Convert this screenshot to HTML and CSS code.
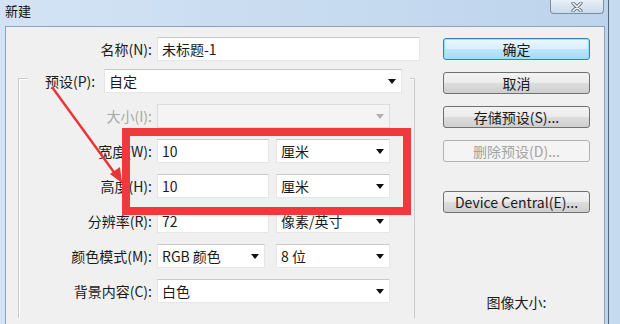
FILE: index.html
```html
<!DOCTYPE html>
<html lang="zh-CN">
<head>
  <meta charset="UTF-8" />
  <title>新建</title>
  <link rel="stylesheet" href="styles.css">
</head>
<body>
  <div class="window">
    <div class="titlebar">
      <span class="title">新建</span>
      <div class="close">
        <svg width="12" height="10" viewBox="0 0 12 10">
          <path d="M2 1 L10 9 M10 1 L2 9" stroke="#5d6b7c" stroke-width="3.2" stroke-linecap="round"/>
          <path d="M2 1 L10 9 M10 1 L2 9" stroke="#f4f7fb" stroke-width="1.6" stroke-linecap="round"/>
        </svg>
      </div>
    </div>

    <div class="panel">
      <div class="form">
        <div class="row name-row">
          <span class="lbl">名称(N):</span>
          <div class="field name-field">未标题-1</div>
        </div>

        <div class="group">
          <div class="preset-row">
            <span class="lbl">预设(P):</span>
            <div class="field preset-field">自定<i class="caret"></i></div>
          </div>

          <div class="row">
            <span class="lbl off">大小(I):</span>
            <div class="field full disabled"><i class="caret"></i></div>
          </div>
          <div class="row">
            <span class="lbl">宽度(W):</span>
            <div class="field num">10</div>
            <div class="field unit">厘米<i class="caret"></i></div>
          </div>
          <div class="row">
            <span class="lbl">高度(H):</span>
            <div class="field num">10</div>
            <div class="field unit">厘米<i class="caret"></i></div>
          </div>
          <div class="row">
            <span class="lbl">分辨率(R):</span>
            <div class="field num">72</div>
            <div class="field unit">像素/英寸<i class="caret"></i></div>
          </div>
          <div class="row">
            <span class="lbl">颜色模式(M):</span>
            <div class="field mode">RGB 颜色<i class="caret"></i></div>
            <div class="field unit">8 位<i class="caret"></i></div>
          </div>
          <div class="row">
            <span class="lbl">背景内容(C):</span>
            <div class="field full">白色<i class="caret"></i></div>
          </div>
        </div>
      </div>

      <div class="actions">
        <button class="btn default">确定</button>
        <button class="btn">取消</button>
        <button class="btn">存储预设(S)...</button>
        <button class="btn" disabled>删除预设(D)...</button>
        <button class="btn device">Device Central(E)...</button>
        <div class="info">图像大小:</div>
      </div>
    </div>

    <!-- red annotation drawn over the dialog -->
    <div class="mark-box"></div>
    <svg class="mark-arrow" width="620" height="324" viewBox="0 0 620 324">
      <line x1="52" y1="87" x2="116" y2="175" stroke="#e83434" stroke-width="2.4"/>
      <polygon points="122,183 110,174 120,167" fill="#e83434"/>
    </svg>
  </div>
</body>
</html>
```

FILE: styles.css
```css
* {
  margin: 0;
  padding: 0;
  box-sizing: border-box;
}

body {
  width: 620px;
  height: 324px;
  overflow: hidden;
  background: #c6daef;
  font-family: "Noto Sans CJK SC", "Liberation Sans", sans-serif;
  font-size: 14px;
  color: #1b1b1b;
}

.window {
  position: relative;
  width: 609px;
  height: 324px;
  border-right: 1px solid #56667a;
  background: linear-gradient(90deg, #d3e3f4, #bdd4ec);
}

.titlebar {
  height: 26px;
  display: flex;
  align-items: flex-start;
  padding-left: 5px;
}

.title {
  font-size: 13px;
  line-height: 22px;
  color: #111;
}

.close {
  margin-left: auto;
  margin-right: 4px;
  width: 54px;
  height: 14px;
  border: 1px solid #7d8ea3;
  border-top: none;
  border-radius: 0 0 4px 4px;
  background: linear-gradient(#e9f0f8, #cbdaeb);
  display: flex;
  align-items: center;
  justify-content: center;
}

.panel {
  margin-left: 5px;
  width: 600px;
  height: 298px;
  border: 1px solid #8fa2b7;
  border-bottom: none;
  background: #f0f0f0;
  display: flex;
}

.form {
  width: 414px;
  padding-top: 10px;
}

.row {
  display: flex;
  align-items: center;
  height: 24px;
  gap: 5px;
}

.lbl {
  white-space: nowrap;
  text-align: right;
}

.off {
  color: #a8a8a8;
}

.name-row .lbl {
  width: 146px;
}

.field {
  height: 24px;
  background: #fff;
  border: 1px solid #e6e6e6;
  border-top-color: #c9c9c9;
  display: flex;
  align-items: center;
  padding-left: 4px;
  white-space: nowrap;
}

.name-field {
  width: 263px;
}

.caret {
  margin-left: auto;
  margin-right: 5px;
  border-left: 4px solid transparent;
  border-right: 4px solid transparent;
  border-top: 5px solid #111;
}

.disabled {
  background: #f4f4f4;
  border-color: #dcdcdc;
}

.disabled .caret {
  border-top-color: #b0b0b0;
}

/* etched group box around the preset settings */
.group {
  margin-top: 17px;
  margin-left: 12px;
  width: 397px;
  height: 240px;
  border: 1px solid #cbcbcb;
  border-bottom: none;
  box-shadow: inset 1px 1px 0 #fff;
  display: flex;
  flex-direction: column;
  gap: 11px;
}

.group .lbl {
  width: 133px;
}

.preset-row {
  margin-top: -10px;
  margin-left: 9px;
  width: 382px;
  height: 24px;
  padding-left: 17px;
  background: #f0f0f0;
  display: flex;
  align-items: center;
  gap: 4px;
}

.group .preset-row .lbl {
  width: 55px;
  text-align: left;
}

.preset-field {
  width: 298px;
}

.full {
  width: 233px;
}

.num {
  width: 112px;
}

.mode {
  width: 108px;
}

.unit {
  width: 114px;
  margin-left: 2px;
}

.mode + .unit {
  margin-left: 6px;
}

.actions {
  margin-left: 23px;
  width: 147px;
  padding-top: 11px;
  display: flex;
  flex-direction: column;
  gap: 12px;
}

.btn {
  height: 22px;
  width: 147px;
  border: 1px solid #707070;
  border-radius: 3px;
  background: linear-gradient(#f3f3f3, #ebebeb 50%, #dddddd 51%, #cfcfcf);
  font-family: inherit;
  font-size: 14px;
  color: #1b1b1b;
  line-height: 20px;
}

.btn.default {
  border-color: #3c7fb1;
  background: linear-gradient(#eaf6fd, #d9f0fc 50%, #bee6fd 51%, #a7d9f5);
  box-shadow: inset 0 0 0 1px #8fe4f8;
}

.btn:disabled {
  border-color: #adb2b5;
  background: #f4f4f4;
  color: #a3a3a3;
}

.btn.device {
  margin-top: 17px;
}

.info {
  margin-top: 67px;
  text-align: center;
}

.mark-box {
  position: absolute;
  left: 122px;
  top: 128px;
  width: 289px;
  height: 87px;
  border: 8px solid #f0393b;
}

.mark-arrow {
  position: absolute;
  left: 0;
  top: 0;
}
```
